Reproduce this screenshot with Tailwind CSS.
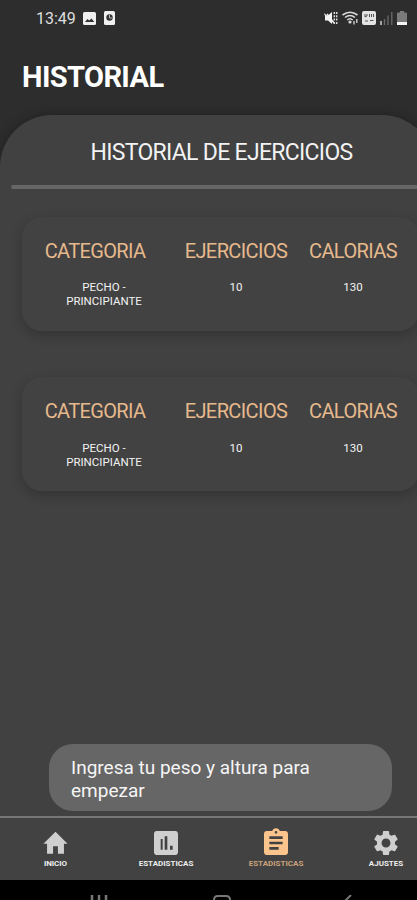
<!DOCTYPE html>
<html lang="es">
<head>
    <meta charset="UTF-8">
    <meta name="viewport" content="width=device-width, initial-scale=1.0">
    <title>Historial</title>
    <script src="https://cdn.jsdelivr.net/npm/@tailwindcss/browser@4"></script>
</head>
<body class="bg-[#2d2d2d] font-['Roboto',sans-serif] text-white">
<div class="w-full h-[900px] flex flex-col overflow-hidden relative">

    <!-- Barra de estado -->
    <div class="h-9 shrink-0 flex items-center justify-between pl-9 pr-[10px] text-[#dedede]">
        <div class="flex items-center">
            <span class="text-[16px] w-[41px] pt-px whitespace-nowrap">13:49</span>
            <svg class="ml-[6px] w-[13px] h-[13px]" viewBox="0 0 13 13"><rect width="13" height="13" rx="1.5" fill="#f0f0f0"/><path d="M2 10l2.5-3 1.7 1.6L8.5 6.500l2.800 3.500z" fill="#333"/></svg>
            <svg class="ml-2 w-[11px] h-[14px]" viewBox="0 0 11 14"><rect width="11" height="14" rx="1.5" fill="#f0f0f0"/><circle cx="5.500" cy="6.500" r="3.200" fill="#333"/><path d="M5.500 4v3h2.500" stroke="#bbb" fill="none"/></svg>
        </div>
        <div class="flex items-center">
            <svg class="w-[14px] h-[14px]" viewBox="0 0 14 14" fill="none"><path d="M0 2l3 2.500h1L8 1v12L4 9.500H1V5z" fill="#f4f4f4"/><path d="M3 3l7 9" stroke="#f4f4f4" stroke-width="1.500"/><path d="M10.300 1v12M12.700 1v12" stroke="#d8d8d8" stroke-width="1.500" stroke-dasharray="2 1.300"/></svg>
            <svg class="ml-1 w-[17px] h-[14px]" viewBox="0 0 17 14" fill="none" stroke="#dcdcdc" stroke-width="1.600"><path d="M.5 4Q8 -1.500 15.500 4M3 6.500Q8 2.500 13 6.500M5.300 9Q8 6.500 10.700 9"/><circle cx="8" cy="11" r=".8" fill="#dcdcdc"/><path d="M12 10v3.500M14.800 8v4" stroke-width="1.300"/></svg>
            <svg class="ml-[3px] w-[14px] h-[14px]" viewBox="0 0 14 14"><rect width="14" height="14" rx="2" fill="#e4e4e4"/><path d="M3 3v3l2-1v-2M7.500 3v3M9.500 3v3M11.500 3v3M3 10h3M8 9.500h3.500" fill="none" stroke="#555" stroke-width="1"/></svg>
            <svg class="ml-1 w-[13px] h-[14px]" viewBox="0 0 13 14"><path d="M1 10v4" stroke="#ccc" stroke-width="1.500"/><path d="M4.500 8v6M8 4.500V14M11.800 1v13" stroke="#6b6b6b" stroke-width="1.300"/></svg>
            <svg class="ml-1 w-[10px] h-[14px]" viewBox="0 0 10 14"><path d="M3 0h4v1.500h2a1 1 0 0 1 1 1V14H0V2.500a1 1 0 0 1 1-1h2z" fill="#7b7b7b"/><path d="M0 11h10v3H0z" fill="#f4f4f4"/></svg>
        </div>
    </div>

    <h1 class="h-[79px] shrink-0 pl-[22px] pt-[21px] text-[29px] leading-[41px] tracking-[-0.6px] font-bold">HISTORIAL</h1>

    <!-- Panel del historial -->
    <main class="w-[434px] grow flex flex-col bg-[#414141] rounded-t-[52px] shadow-[0_0_12px_rgba(0,0,0,0.3)]">
        <h2 class="pl-[90.5px] h-[70px] pt-[22px] text-[23px] leading-8 tracking-[-0.7px] text-[#f2f2f2]">HISTORIAL DE EJERCICIOS</h2>
        <div class="ml-[11px] h-[4px] shrink-0 rounded-full bg-[#666]"></div>

        <section class="ml-[22px] mt-[28px] w-[397px] h-[114px] shrink-0 rounded-[20px] bg-[#424242] shadow-[0_4px_12px_rgba(0,0,0,0.22)] grid grid-cols-[155px_118px_116px] pt-[22px] text-center">
            <div class="-ml-[9px]">
                <h3 class="text-[20px] leading-6 tracking-[-0.65px] text-[#e6b98d]">CATEGORIA</h3>
                <p class="ml-[18px] mt-[17px] text-[11.5px] leading-[14px] text-[#f2f2f2]">PECHO -<br>PRINCIPIANTE</p>
            </div>
            <div>
                <h3 class="text-[20px] leading-6 tracking-[-0.6px] text-[#e6b98d]">EJERCICIOS</h3>
                <p class="mt-[17px] text-[11.5px] leading-[14px] text-[#f2f2f2]">10</p>
            </div>
            <div>
                <h3 class="text-[20px] leading-6 tracking-[-0.6px] text-[#e6b98d]">CALORIAS</h3>
                <p class="mt-[17px] text-[11.5px] leading-[14px] text-[#f2f2f2]">130</p>
            </div>
        </section>

        <section class="ml-[22px] mt-[46px] w-[397px] h-[114px] shrink-0 rounded-[20px] bg-[#424242] shadow-[0_4px_12px_rgba(0,0,0,0.22)] grid grid-cols-[155px_118px_116px] pt-[22px] text-center">
            <div class="-ml-[9px]">
                <h3 class="text-[20px] leading-6 tracking-[-0.65px] text-[#e6b98d]">CATEGORIA</h3>
                <p class="ml-[18px] mt-[18px] text-[11.5px] leading-[14px] text-[#f2f2f2]">PECHO -<br>PRINCIPIANTE</p>
            </div>
            <div>
                <h3 class="text-[20px] leading-6 tracking-[-0.6px] text-[#e6b98d]">EJERCICIOS</h3>
                <p class="mt-[18px] text-[11.5px] leading-[14px] text-[#f2f2f2]">10</p>
            </div>
            <div>
                <h3 class="text-[20px] leading-6 tracking-[-0.6px] text-[#e6b98d]">CALORIAS</h3>
                <p class="mt-[18px] text-[11.5px] leading-[14px] text-[#f2f2f2]">130</p>
            </div>
        </section>

        <!-- Aviso -->
        <div class="mt-auto mb-[5px] ml-[49px] w-[343px] h-[67px] rounded-[24px] bg-[#666] pl-[22px] pt-[12px] text-[19px] leading-[23px] text-[#f5f5f5]">Ingresa tu peso y altura para<br>empezar</div>
    </main>

    <!-- Menú inferior -->
    <nav class="h-[64px] shrink-0 border-t-2 border-[#777] bg-[#424242] grid grid-cols-[111px_110px_110px_110px] text-[8px] leading-[10px] font-bold text-center text-[#eee]">
        <a class="flex flex-col items-center pt-[10px]">
            <svg class="w-[29px] h-[30px] -mb-px" viewBox="0 0 24 24" preserveAspectRatio="none" fill="#cfcfcf"><path d="M10 20.500v-6h4v6h5v-8h3L12 3 2 12.500h3v8z"/></svg>
            <span class="mt-[2px] tracking-[-0.1px]">INICIO</span>
        </a>
        <a class="flex flex-col items-center pt-[11px]">
            <svg class="w-8 h-8 -my-[2px]" viewBox="0 0 24 24" fill="#cfcfcf"><path d="M19 3H5c-1.100 0-2 .9-2 2v14c0 1.100.9 2 2 2h14c1.100 0 2-.9 2-2V5c0-1.100-.9-2-2-2zM9.500 17H8V9h1.500zm3.500 0h-2V7h2v10zm4 0h-2v-3h2z"/></svg>
            <span class="mt-[2px]">ESTADISTICAS</span>
        </a>
        <a class="flex flex-col items-center pt-[11px] text-[#c9a27c]">
            <svg class="w-8 h-8 -my-[2px]" viewBox="0 0 24 24" fill="#fbc48c"><path d="M19 3h-4.180C14.400 1.840 13.300 1 12 1c-1.300 0-2.400.84-2.820 2H5c-1.100 0-2 .9-2 2v14c0 1.100.9 2 2 2h14c1.100 0 2-.9 2-2V5c0-1.100-.9-2-2-2zm-7 0c.55 0 1 .45 1 1s-.45 1-1 1-1-.45-1-1 .45-1 1-1zm2 14H7v-2h7v2zm3-4H7v-2h10v2zm0-4H7V7h10v2z"/></svg>
            <span class="mt-[2px]">ESTADISTICAS</span>
        </a>
        <a class="flex flex-col items-center pt-[11px]">
            <svg class="w-[30px] h-[30px] -my-[1px]" viewBox="0 0 24 24" fill="#cfcfcf"><path d="M19.140 12.940c.04-.3.06-.61.06-.94 0-.32-.02-.64-.07-.94l2.030-1.580c.18-.14.23-.41.12-.61l-1.920-3.320c-.12-.22-.37-.29-.59-.22l-2.390.96c-.5-.38-1.030-.7-1.620-.94l-.36-2.540c-.04-.24-.24-.41-.48-.41h-3.840c-.24 0-.43.17-.47.41l-.36 2.540c-.59.24-1.130.57-1.620.94l-2.390-.96c-.22-.08-.47 0-.59.22L2.740 8.870c-.12.21-.08.47.12.61l2.030 1.580c-.05.3-.09.63-.09.94s.02.64.07.94l-2.030 1.580c-.18.14-.23.41-.12.61l1.920 3.320c.12.22.37.29.59.22l2.390-.96c.5.38 1.030.7 1.620.94l.36 2.540c.05.24.24.41.48.41h3.840c.24 0 .44-.17.47-.41l.36-2.540c.59-.24 1.130-.56 1.620-.94l2.390.96c.22.08.47 0 .59-.22l1.920-3.320c.12-.22.07-.47-.12-.61l-2.010-1.580zM12 15.600c-1.980 0-3.600-1.620-3.600-3.600s1.620-3.600 3.600-3.600 3.600 1.620 3.600 3.600-1.620 3.600-3.600 3.600z"/></svg>
            <span class="mt-[2px]">AJUSTES</span>
        </a>
    </nav>

    <!-- Botones del sistema -->
    <div class="h-5 shrink-0 bg-black flex items-end">
        <svg class="ml-[90px] w-[18px] h-[5px]" viewBox="0 0 18 5"><path d="M2 0v5M9 0v5M16 0v5" stroke="#777" stroke-width="2.500"/></svg>
        <svg class="ml-[105px] w-[18px] h-[5px]" viewBox="0 0 18 5" fill="none"><path d="M1 6V5q0-4 4-4h8q4 0 4 4v1" stroke="#777" stroke-width="2"/></svg>
        <svg class="ml-[112px] w-[10px] h-[5px]" viewBox="0 0 10 5"><path d="M8 0L2 6" stroke="#777" stroke-width="2"/></svg>
    </div>
</div>
</body>
</html>
